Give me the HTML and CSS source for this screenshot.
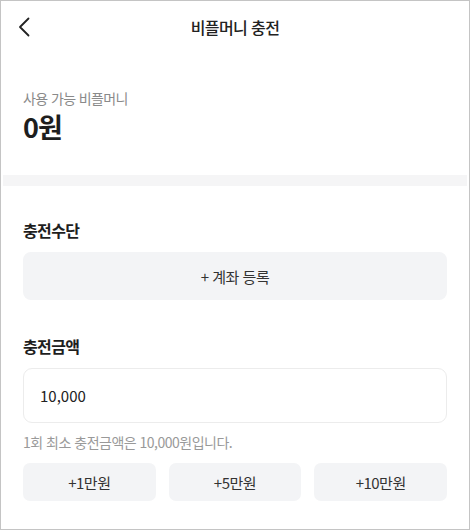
FILE: index.html
```html
<!DOCTYPE html>
<html lang="ko">
<head>
<meta charset="utf-8">
<link rel="stylesheet" href="styles.css">
</head>
<body>
<div class="frame">
  <header class="topbar">
    <button class="back" aria-label="뒤로">
      <svg width="12" height="20" viewBox="0 0 12 20"><path d="M10.5 1.5 L2 10 L10.5 18.5" fill="none" stroke="#222" stroke-width="1.8" stroke-linecap="round" stroke-linejoin="round"/></svg>
    </button>
    <h1 class="title">비플머니 충전</h1>
  </header>
  <section class="balance">
    <div class="balance-label">사용 가능 비플머니</div>
    <div class="balance-value">0원</div>
  </section>
  <div class="divider"></div>
  <section class="section">
    <h2 class="section-title">충전수단</h2>
    <button class="account-btn">+ 계좌 등록</button>
  </section>
  <section class="section section-amount">
    <h2 class="section-title">충전금액</h2>
    <div class="amount-input">10,000</div>
    <p class="hint">1회 최소 충전금액은 10,000원입니다.</p>
    <div class="quick">
      <button class="quick-btn">+1만원</button>
      <button class="quick-btn">+5만원</button>
      <button class="quick-btn">+10만원</button>
    </div>
  </section>
</div>
</body>
</html>
```
FILE: styles.css
```css
* { box-sizing: border-box; }
html, body { margin: 0; padding: 0; background: #fff; }
body {
  font-family: "Noto Sans CJK KR", "Noto Sans", sans-serif;
  color: #222;
  width: 470px;
  height: 531px;
}
.frame {
  width: 470px;
  height: 530px;
  border: 1px solid #c4c4c4;
  overflow: hidden;
  position: relative;
}
.topbar {
  height: 54px;
  display: flex;
  align-items: center;
  justify-content: center;
  position: relative;
}
.back {
  position: absolute;
  left: 17px;
  top: 16px;
  border: 0;
  background: none;
  padding: 0;
  width: 12px;
  height: 20px;
}
.title {
  margin: 0;
  font-size: 16px;
  font-weight: 500;
  letter-spacing: -0.6px;
  color: #222;
  line-height: 20px;
  padding-bottom: 2px;
}
.balance {
  padding: 34px 22px 0;
  height: 120px;
}
.balance-label {
  font-size: 14px;
  letter-spacing: -0.6px;
  color: #8a8a8a;
  line-height: 18px;
}
.balance-value {
  margin-top: 4px;
  font-size: 27px;
  font-weight: 700;
  letter-spacing: -1px;
  line-height: 32px;
  color: #1e1e1e;
}
.divider {
  height: 11px;
  background: #f5f5f6;
  margin: 0 2px;
}
.section {
  padding: 32px 22px 0;
}
.section-amount { padding-top: 34px; }
.section-title {
  margin: 0;
  font-size: 16px;
  font-weight: 700;
  letter-spacing: -0.6px;
  line-height: 24px;
  color: #1e1e1e;
}
.account-btn {
  display: block;
  width: 100%;
  height: 48px;
  margin-top: 10px;
  border: 0;
  border-radius: 8px;
  background: #f3f4f6;
  font-family: inherit;
  font-size: 15px;
  letter-spacing: -0.5px;
  color: #333;
}
.amount-input {
  margin-top: 10px;
  height: 55px;
  border: 1px solid #ececec;
  border-radius: 9px;
  padding: 0 16px;
  display: flex;
  align-items: center;
  font-size: 15px;
  color: #222;
}
.hint {
  margin: 9px 0 0;
  font-size: 14px;
  letter-spacing: -0.5px;
  line-height: 20px;
  color: #999;
}
.quick {
  margin-top: 11px;
  display: grid;
  grid-template-columns: repeat(3, 1fr);
  gap: 13px;
}
.quick-btn {
  height: 38px;
  border: 0;
  border-radius: 7px;
  background: #f3f4f6;
  font-family: inherit;
  font-size: 15px;
  letter-spacing: -0.5px;
  color: #333;
}
```
